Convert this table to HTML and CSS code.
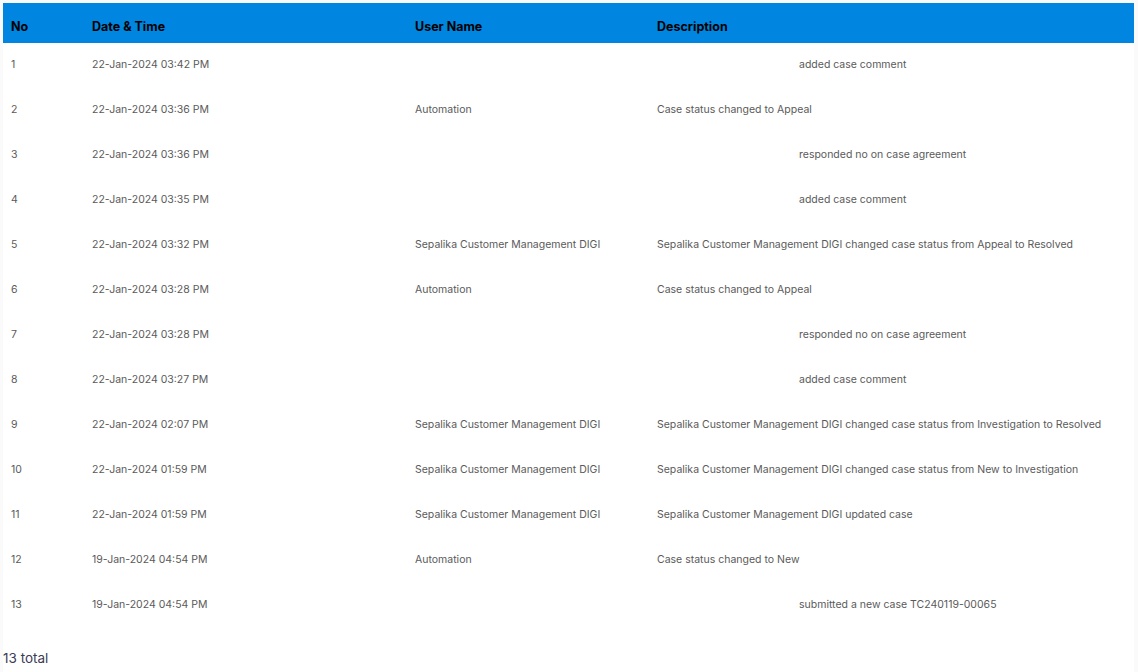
FILE: index.html
```html
<!DOCTYPE html>
<html lang="en">
<head>
  <meta charset="UTF-8" />
  <title>Case History</title>
  <link rel="stylesheet" href="styles.css">
</head>
<body>
  <div class="history">
    <table class="history-table">
      <colgroup>
        <col class="col-no">
        <col class="col-date">
        <col class="col-user">
        <col class="col-desc">
      </colgroup>
      <thead>
        <tr>
          <th>No</th>
          <th>Date &amp; Time</th>
          <th>User Name</th>
          <th>Description</th>
        </tr>
      </thead>
      <tbody>
        <tr><td>1</td><td>22-Jan-2024 03:42 PM</td><td></td><td><span class="no-user"></span>added case comment</td></tr>
        <tr><td>2</td><td>22-Jan-2024 03:36 PM</td><td>Automation</td><td>Case status changed to Appeal</td></tr>
        <tr><td>3</td><td>22-Jan-2024 03:36 PM</td><td></td><td><span class="no-user"></span>responded no on case agreement</td></tr>
        <tr><td>4</td><td>22-Jan-2024 03:35 PM</td><td></td><td><span class="no-user"></span>added case comment</td></tr>
        <tr><td>5</td><td>22-Jan-2024 03:32 PM</td><td>Sepalika Customer Management DIGI</td><td>Sepalika Customer Management DIGI changed case status from Appeal to Resolved</td></tr>
        <tr><td>6</td><td>22-Jan-2024 03:28 PM</td><td>Automation</td><td>Case status changed to Appeal</td></tr>
        <tr><td>7</td><td>22-Jan-2024 03:28 PM</td><td></td><td><span class="no-user"></span>responded no on case agreement</td></tr>
        <tr><td>8</td><td>22-Jan-2024 03:27 PM</td><td></td><td><span class="no-user"></span>added case comment</td></tr>
        <tr><td>9</td><td>22-Jan-2024 02:07 PM</td><td>Sepalika Customer Management DIGI</td><td>Sepalika Customer Management DIGI changed case status from Investigation to Resolved</td></tr>
        <tr><td>10</td><td>22-Jan-2024 01:59 PM</td><td>Sepalika Customer Management DIGI</td><td>Sepalika Customer Management DIGI changed case status from New to Investigation</td></tr>
        <tr><td>11</td><td>22-Jan-2024 01:59 PM</td><td>Sepalika Customer Management DIGI</td><td>Sepalika Customer Management DIGI updated case</td></tr>
        <tr><td>12</td><td>19-Jan-2024 04:54 PM</td><td>Automation</td><td>Case status changed to New</td></tr>
        <tr><td>13</td><td>19-Jan-2024 04:54 PM</td><td></td><td><span class="no-user"></span>submitted a new case TC240119-00065</td></tr>
      </tbody>
    </table>
    <div class="total">13 total</div>
  </div>
</body>
</html>
```

FILE: styles.css
```css
body {
  margin: 0;
  background-color: #fafafa;
  font-family: "Inter", "Open Sans", sans-serif;
  color: #555;
}

.history {
  padding: 3px 4px 0 3px;
}

.history-table {
  width: 100%;
  border-collapse: collapse;
  table-layout: fixed;
  background-color: #fff;
}

.col-no { width: 81px; }
.col-date { width: 323px; }
.col-user { width: 242px; }

.history-table th {
  background-color: #0086e0;
  color: #000;
  font-size: 12.5px;
  font-weight: 700;
  text-align: left;
  height: 40px;
  padding: 6px 8px 0;
  box-sizing: border-box;
}

.history-table td {
  height: 45px;
  padding: 0 8px 2px;
  box-sizing: border-box;
  font-size: 10.5px;
  color: #5a5a5a;
  white-space: nowrap;
}

.no-user {
  display: inline-block;
  width: 142px;
}

.total {
  background-color: #fff;
  padding: 22px 0 0 0;
  font-size: 13.5px;
  color: #3b3b55;
  height: 22px;
}
```
